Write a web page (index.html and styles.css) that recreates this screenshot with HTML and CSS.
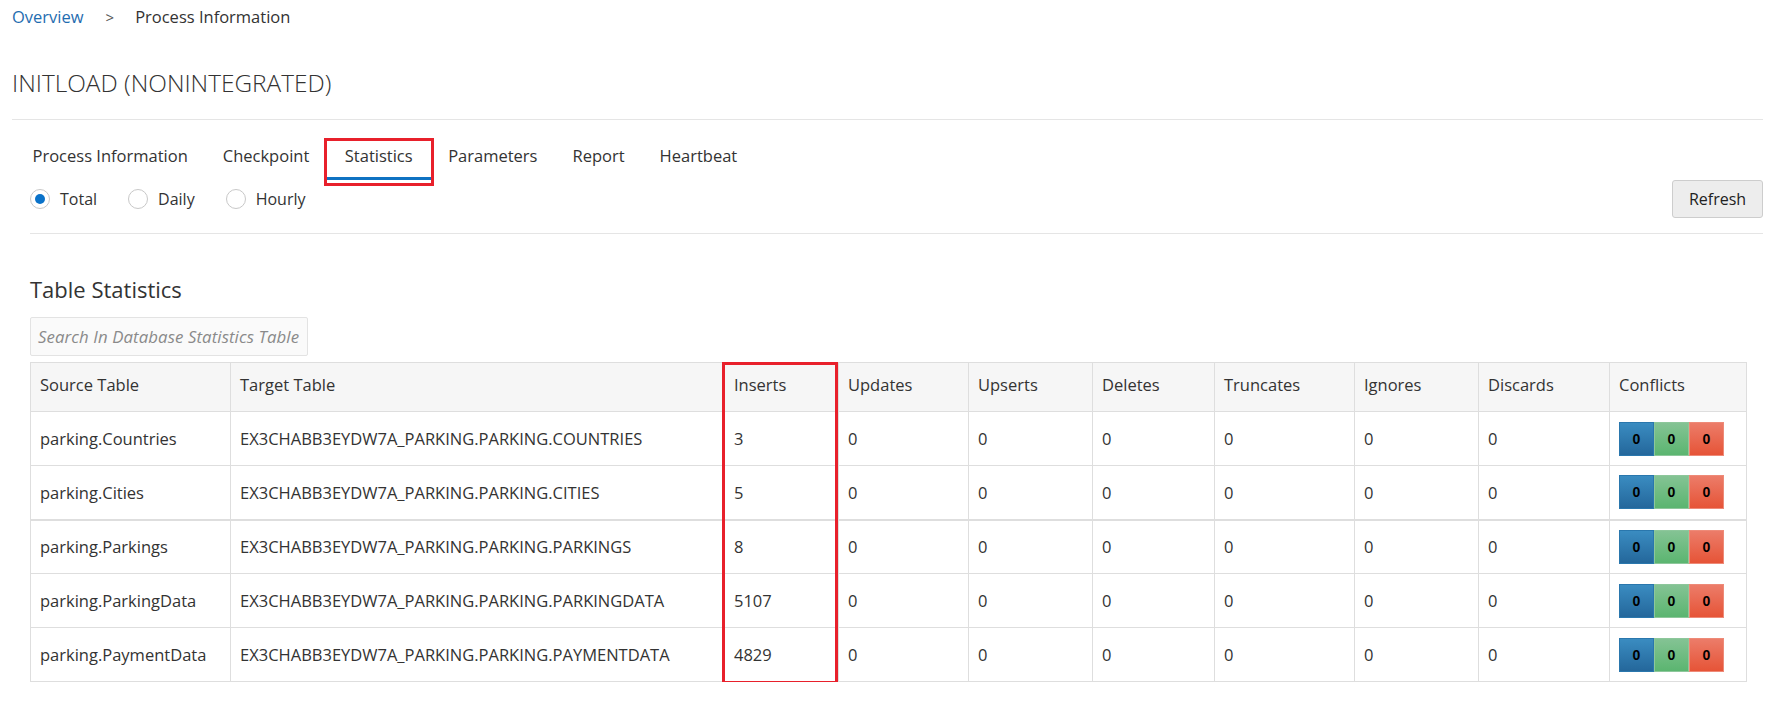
FILE: index.html
```html
<!DOCTYPE html>
<html lang="en">
<head>
<meta charset="utf-8">
<title>Process Information</title>
<link rel="stylesheet" href="styles.css">
</head>
<body>
<div class="page">
  <nav class="breadcrumb">
    <a class="crumb-link" href="#">Overview</a>
    <span class="crumb-sep">&gt;</span>
    <span class="crumb-current">Process Information</span>
  </nav>
  <h1 class="title">INITLOAD (NONINTEGRATED)</h1>
  <div class="section">
    <ul class="tabs">
      <li class="tab"><a class="tab-link">Process Information</a></li>
      <li class="tab"><a class="tab-link">Checkpoint</a></li>
      <li class="tab active highlight"><a class="tab-link">Statistics</a></li>
      <li class="tab"><a class="tab-link">Parameters</a></li>
      <li class="tab"><a class="tab-link">Report</a></li>
      <li class="tab"><a class="tab-link">Heartbeat</a></li>
    </ul>
    <div class="toolbar">
      <div class="radios">
        <label class="radio-item"><span class="radio checked"></span><span class="radio-label">Total</span></label>
        <label class="radio-item"><span class="radio"></span><span class="radio-label">Daily</span></label>
        <label class="radio-item"><span class="radio"></span><span class="radio-label">Hourly</span></label>
      </div>
      <button class="btn">Refresh</button>
    </div>
    <h2 class="subtitle">Table Statistics</h2>
    <div class="search"><span class="placeholder">Search In Database Statistics Table</span></div>
    <div class="table-wrap">
      <table class="stats">
        <colgroup>
          <col class="w-src"><col class="w-tgt"><col class="w-ins"><col class="w-upd"><col class="w-ups">
          <col class="w-del"><col class="w-tru"><col class="w-ign"><col class="w-dis"><col class="w-con">
        </colgroup>
        <thead>
          <tr><th>Source Table</th><th>Target Table</th><th>Inserts</th><th>Updates</th><th>Upserts</th><th>Deletes</th><th>Truncates</th><th>Ignores</th><th>Discards</th><th>Conflicts</th></tr>
        </thead>
        <tbody>
          <tr><td>parking.Countries</td><td>EX3CHABB3EYDW7A_PARKING.PARKING.COUNTRIES</td><td>3</td><td>0</td><td>0</td><td>0</td><td>0</td><td>0</td><td>0</td><td><div class="badges"><span class="badge b-blue">0</span><span class="badge b-green">0</span><span class="badge b-red">0</span></div></td></tr>
          <tr class="thick"><td>parking.Cities</td><td>EX3CHABB3EYDW7A_PARKING.PARKING.CITIES</td><td>5</td><td>0</td><td>0</td><td>0</td><td>0</td><td>0</td><td>0</td><td><div class="badges"><span class="badge b-blue">0</span><span class="badge b-green">0</span><span class="badge b-red">0</span></div></td></tr>
          <tr><td>parking.Parkings</td><td>EX3CHABB3EYDW7A_PARKING.PARKING.PARKINGS</td><td>8</td><td>0</td><td>0</td><td>0</td><td>0</td><td>0</td><td>0</td><td><div class="badges"><span class="badge b-blue">0</span><span class="badge b-green">0</span><span class="badge b-red">0</span></div></td></tr>
          <tr><td>parking.ParkingData</td><td>EX3CHABB3EYDW7A_PARKING.PARKING.PARKINGDATA</td><td>5107</td><td>0</td><td>0</td><td>0</td><td>0</td><td>0</td><td>0</td><td><div class="badges"><span class="badge b-blue">0</span><span class="badge b-green">0</span><span class="badge b-red">0</span></div></td></tr>
          <tr class="last"><td>parking.PaymentData</td><td>EX3CHABB3EYDW7A_PARKING.PARKING.PAYMENTDATA</td><td>4829</td><td>0</td><td>0</td><td>0</td><td>0</td><td>0</td><td>0</td><td><div class="badges"><span class="badge b-blue">0</span><span class="badge b-green">0</span><span class="badge b-red">0</span></div></td></tr>
        </tbody>
      </table>
      <div class="col-highlight"></div>
    </div>
  </div>
</div>
</body>
</html>
```
FILE: styles.css
```css
* { box-sizing: border-box; }
html, body { margin: 0; padding: 0; background: #fff; }
body {
  font-family: "Open Sans", "Noto Sans", sans-serif;
  font-size: 16.5px;
  color: #333;
}
.page { padding: 0 18px 0 12px; }

.breadcrumb {
  height: 34px;
  line-height: 34px;
  font-size: 16.5px;
  display: flex;
  align-items: center;
}
.crumb-link { color: #1f6db0; text-decoration: none; }
.crumb-sep { color: #555; margin: 0 21px 0 22px; font-size: 15px; }
.crumb-current { color: #333; }

.title {
  margin: 33px 0 0;
  height: 32px;
  line-height: 32px;
  font-size: 24.4px;
  font-weight: 300;
  color: #333;
  padding-bottom: 20px;
  border-bottom: 1px solid #e5e5e5;
  box-sizing: content-box;
}

.section { padding-left: 18px; }

.tabs {
  list-style: none;
  margin: 21px 0 0 -16px;
  padding: 0;
  display: flex;
}
.tab { padding: 0 17.5px; position: relative; }
.tab:first-child { padding-left: 18.5px; }
.tab-link {
  display: block;
  height: 39px;
  line-height: 30px;
  padding-bottom: 6px;
  border-bottom: 3px solid transparent;
  color: #333;
  cursor: pointer;
}
.tab.active { padding: 0; }
.tab.active .tab-link { padding: 0 18px 6px; border-bottom-color: #0f72c2; }
.tab.highlight::after {
  content: "";
  position: absolute;
  left: -3px; right: -3px; top: -3px; bottom: -6px;
  border: 3px solid #e8202b;
  pointer-events: none;
}

.toolbar {
  display: flex;
  justify-content: space-between;
  align-items: center;
  height: 38px;
  padding-bottom: 15px;
  box-sizing: content-box;
  border-bottom: 1px solid #e5e5e5;
}
.radios { display: flex; align-items: center; gap: 31px; }
.radio-item { display: flex; align-items: center; gap: 10px; cursor: pointer; font-size: 16px; }
.radio {
  width: 20px; height: 20px;
  border: 1px solid #c8c8c8;
  border-radius: 50%;
  background: #fff;
  display: flex; align-items: center; justify-content: center;
}
.radio.checked::before {
  content: "";
  width: 10px; height: 10px;
  border-radius: 50%;
  background: #0a72c9;
}
.radio-label { line-height: 20px; }

.btn {
  width: 91px; height: 38px;
  border: 1px solid #cdcdcd;
  border-radius: 3px;
  background: #ededed;
  font-family: inherit;
  font-size: 16px;
  color: #222;
  padding: 0;
}

.subtitle {
  margin: 39px 0 0;
  height: 32px;
  line-height: 32px;
  font-size: 22px;
  font-weight: 400;
  color: #333;
}

.search {
  margin-top: 12px;
  width: 278px;
  height: 39px;
  border: 1px solid #e3e3e3;
  border-radius: 2px;
  background: #fafafa;
  padding-left: 7px;
  display: flex;
  align-items: center;
  overflow: hidden;
}
.placeholder { font-style: italic; color: #8a8a8a; font-size: 16.8px; white-space: nowrap; letter-spacing: 0.1px; }

.table-wrap { position: relative; margin-top: 6px; width: 1716px; }
.stats {
  border-collapse: collapse;
  table-layout: fixed;
  width: 1716px;
}
.w-src { width: 200px; } .w-tgt { width: 494px; } .w-ins { width: 114px; }
.w-upd { width: 130px; } .w-ups { width: 124px; } .w-del { width: 122px; }
.w-tru { width: 140px; } .w-ign { width: 124px; } .w-dis { width: 131px; }
.w-con { width: 137px; }
.stats th, .stats td {
  border: 1px solid #dedede;
  text-align: left;
  padding: 0 9px;
  white-space: nowrap;
}
.stats th {
  background: #f6f6f6;
  font-weight: 400;
  height: 49px;
  padding-bottom: 6px;
}
.stats td { height: 54px; }
.stats tr.thick td { border-bottom-width: 2px; }
.badges { display: flex; }
.badge {
  width: 35px; height: 34px;
  display: flex; align-items: center; justify-content: center;
  font-family: "Liberation Sans", Arial, sans-serif;
  font-weight: 700;
  font-size: 14px;
  color: #000;
  border: 1px solid transparent;
}
.b-blue { background: linear-gradient(#3a8cc1, #24679b); border-color: #2a77ad; }
.b-green { background: linear-gradient(#84c394, #5bb570); border-color: #8dc79b; }
.b-red { background: linear-gradient(#ec7c69, #e65437); border-color: #ee8a78; }

.col-highlight {
  position: absolute;
  left: 692px;
  top: 0;
  width: 116px;
  bottom: -2px;
  border: 3px solid #e8202b;
  pointer-events: none;
}
```
